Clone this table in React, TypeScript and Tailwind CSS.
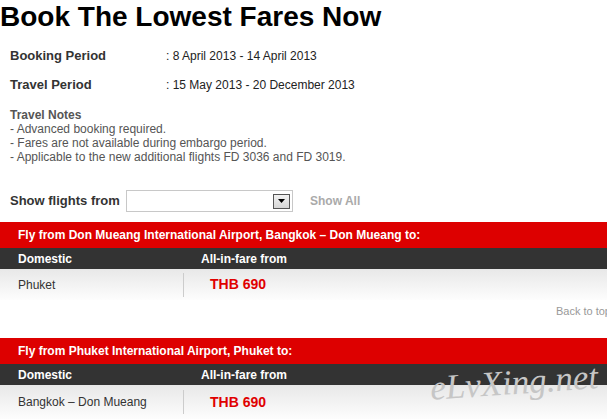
export default function App() {
  return (
    <div className="relative w-full h-[420px] overflow-hidden bg-white font-['Liberation_Sans',Arial,sans-serif]">
      <div className="w-[615px]">
        {/* heading */}
        <h1 className="text-[28px] leading-[34px] font-bold text-black">Book The Lowest Fares Now</h1>

        {/* periods */}
        <div className="mt-[7px] pl-[10px]">
          <div className="flex items-baseline h-[29px] leading-[29px]">
            <div className="w-[156px] text-[13px] font-bold text-[#333]">Booking Period</div>
            <div className="text-[12px] text-[#222]">: 8 April 2013 - 14 April 2013</div>
          </div>
          <div className="flex items-baseline h-[29px] leading-[29px]">
            <div className="w-[156px] text-[13px] font-bold text-[#333]">Travel Period</div>
            <div className="text-[12px] text-[#222]">: 15 May 2013 - 20 December 2013</div>
          </div>
        </div>

        {/* notes */}
        <div className="mt-[9px] pl-[10px] text-[12px] leading-[14px] text-[#555]">
          <div className="font-bold">Travel Notes</div>
          <div>- Advanced booking required.</div>
          <div>- Fares are not available during embargo period.</div>
          <div>- Applicable to the new additional flights FD 3036 and FD 3019.</div>
        </div>

        {/* filter */}
        <div className="mt-[26px] pl-[10px] flex items-center h-[22px]">
          <div className="w-[116px] text-[13px] font-bold text-[#333]">Show flights from</div>
          <div className="w-[167px] h-[22px] border border-[#c8c8c8] bg-white flex items-center justify-end pr-[2px]">
            <div className="w-[17px] h-[15px] border border-[#555] bg-gradient-to-b from-[#f2f2f2] to-[#d6d6d6] flex items-center justify-center">
              <svg width="7" height="4" viewBox="0 0 7 4">
                <polygon points="0,0 7,0 3.5,4" fill="#000" />
              </svg>
            </div>
          </div>
          <div className="ml-[17px] text-[12px] font-bold text-[#aaa]">Show All</div>
        </div>

        {/* table 1 */}
        <div className="mt-[10px]">
          <div className="h-[26px] bg-[#dd0000] flex items-center pl-[18px] text-[12px] font-bold text-white">
            Fly from Don Mueang International Airport, Bangkok – Don Mueang to:
          </div>
          <div className="h-[21px] bg-[#333] flex items-center text-[12px] font-bold text-white">
            <div className="w-[201px] pl-[18px]">Domestic</div>
            <div>All-in-fare from</div>
          </div>
          <div className="h-[31px] bg-gradient-to-b from-[#e8e8e8] to-[#fdfdfd] flex items-center">
            <div className="w-[183px] pl-[18px] text-[12px] text-[#333]">Phuket</div>
            <div className="h-[24px] border-l border-[#ccc] pl-[26px] flex items-center text-[14px] font-bold text-[#e00000]">THB 690</div>
          </div>
        </div>

        <div className="mt-[4px] text-right pr-[4px] text-[11px] leading-[14px] text-[#999]">Back to top</div>

        {/* table 2 */}
        <div className="mt-[20px]">
          <div className="h-[26px] bg-[#dd0000] flex items-center pl-[18px] text-[12px] font-bold text-white">
            Fly from Phuket International Airport, Phuket to:
          </div>
          <div className="h-[21px] bg-[#333] flex items-center text-[12px] font-bold text-white">
            <div className="w-[201px] pl-[18px]">Domestic</div>
            <div>All-in-fare from</div>
          </div>
          <div className="h-[34px] bg-gradient-to-b from-[#e8e8e8] to-[#fdfdfd] flex items-center">
            <div className="w-[183px] pl-[18px] text-[12px] text-[#333]">Bangkok – Don Mueang</div>
            <div className="h-[24px] border-l border-[#ccc] pl-[26px] flex items-center text-[14px] font-bold text-[#e00000]">THB 690</div>
          </div>
        </div>
      </div>

      {/* watermark */}
      <div className="absolute left-[430px] top-[362px] -rotate-[4deg] text-[35px] leading-[42px] italic font-['Liberation_Serif',serif] text-[#c6c6c6] select-none">
        eLvXing.net
      </div>
    </div>
  )
}
